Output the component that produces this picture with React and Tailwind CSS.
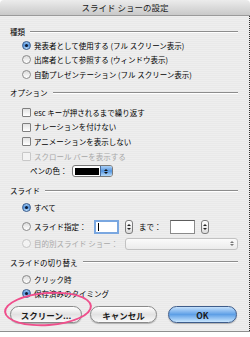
import React from 'react';

const Radio = ({ checked, disabled }) => (
  <span
    className={`w-[9px] h-[9px] rounded-full border shrink-0 flex items-center justify-center ${
      checked
        ? 'border-[#35598c] bg-linear-to-b from-[#9cc7f2] via-[#4f91dc] to-[#c2e2fc]'
        : disabled
        ? 'border-[#c6c6c6] bg-[#f3f3f3]'
        : 'border-[#8b8b8b] bg-linear-to-b from-[#dcdcdc] to-white'
    }`}
  >
    {checked && <span className="w-[3px] h-[3px] rounded-full bg-[#0e1a33]" />}
  </span>
);

const Check = ({ disabled }) => (
  <span
    className={`w-[9px] h-[9px] rounded-[1px] border shrink-0 ${
      disabled ? 'border-[#c8c8c8] bg-[#f3f3f3]' : 'border-[#7f7f7f] bg-linear-to-b from-[#e2e2e2] to-white'
    }`}
  />
);

const Header = ({ children, className = '' }) => (
  <div className={`h-[12px] flex items-center gap-[5px] ${className}`}>
    <span className="text-black">{children}</span>
    <span className="flex-1 h-px bg-[#8c8c8c] border-b border-white box-content" />
  </div>
);

const Stepper = ({ disabled }) => (
  <span
    className={`w-[8px] h-[14px] rounded-[3px] border flex flex-col items-center justify-center gap-[2px] shrink-0 ${
      disabled ? 'border-[#c4c4c4] bg-[#f0f0f0]' : 'border-[#7d7d7d] bg-linear-to-b from-white to-[#dcdcdc]'
    }`}
  >
    <span className="w-0 h-0 border-l-[2px] border-r-[2px] border-b-[2px] border-l-transparent border-r-transparent border-b-[#222]" />
    <span className="w-0 h-0 border-l-[2px] border-r-[2px] border-t-[2px] border-l-transparent border-r-transparent border-t-[#222]" />
  </span>
);

const AquaButton = ({ children, blue, className = '' }) => (
  <div
    className={`h-[17px] rounded-full border flex items-center justify-center text-[8.5px] font-bold text-[#1a1a1a] shadow-[0_1px_1px_rgba(0,0,0,0.25)] ${
      blue
        ? 'border-[#3e5c8a] bg-linear-to-b from-[#c4e0fb] via-[#5d9fe6] to-[#c9e6fd]'
        : 'border-[#8a8a8a] bg-linear-to-b from-white via-[#e2e2e2] to-[#fafafa]'
    } ${className}`}
  >
    {children}
  </div>
);

export default function App() {
  return (
    <div className="w-[250px] h-[337px] bg-white relative overflow-hidden font-['Noto_Sans_CJK_JP','Noto_Sans',sans-serif] text-[7.5px] leading-none text-black">
      <div className="h-[332px] flex flex-col border-b border-[#8e8e8e]">
        <div className="h-[16px] shrink-0 rounded-t-[4px] bg-linear-to-b from-[#ececec] to-[#c9c9c9] border-b border-[#9a9a9a] flex items-center justify-center">
          <span className="text-[8.5px] text-[#1c1c1c]">スライド ショーの設定</span>
        </div>

        <div className="flex-1 pl-[10px] pr-[11px] border-r border-dotted border-r-[#333] bg-[repeating-linear-gradient(180deg,#eeeeee_0px,#eeeeee_1px,#e9e9e9_1px,#e9e9e9_2px)] relative">
          <Header className="mt-[10px]">種類</Header>
          <div className="pl-[12px]">
            <div className="h-[14.5px] flex items-center gap-[3px]"><Radio checked /><span>発表者として使用する (フル スクリーン表示)</span></div>
            <div className="h-[14.5px] flex items-center gap-[3px]"><Radio /><span>出席者として参照する (ウィンドウ表示)</span></div>
            <div className="h-[14.5px] flex items-center gap-[3px]"><Radio /><span>自動プレゼンテーション (フル スクリーン表示)</span></div>
          </div>

          <Header className="mt-[5.5px]">オプション</Header>
          <div className="pl-[12px] mt-[6px]">
            <div className="h-[14.8px] flex items-center gap-[3px]"><Check /><span>esc キーが押されるまで繰り返す</span></div>
            <div className="h-[14.8px] flex items-center gap-[3px]"><Check /><span>ナレーションを付けない</span></div>
            <div className="h-[14.8px] flex items-center gap-[3px]"><Check /><span>アニメーションを表示しない</span></div>
            <div className="h-[14.8px] flex items-center gap-[3px] text-[#a8a8a8]"><Check disabled /><span>スクロール バーを表示する</span></div>
          </div>
          <div className="h-[14px] pl-[20px] flex items-center gap-[4px]">
            <span>ペンの色：</span>
            <div className="w-[41px] h-[12px] rounded-[3px] border border-[#7a7a7a] bg-white flex items-center overflow-hidden">
              <span className="ml-[2px] w-[24px] h-[7px] bg-black" />
              <span className="ml-auto w-[12px] h-full bg-linear-to-b from-[#a9d0f7] via-[#5495df] to-[#b5daf9] border-l border-[#4a6d9c] flex flex-col items-center justify-center gap-[1px]">
                <span className="w-0 h-0 border-l-[2px] border-r-[2px] border-b-[2px] border-l-transparent border-r-transparent border-b-[#111]" />
                <span className="w-0 h-0 border-l-[2px] border-r-[2px] border-t-[2px] border-l-transparent border-r-transparent border-t-[#111]" />
              </span>
            </div>
          </div>

          <Header className="mt-[6.8px]">スライド</Header>
          <div className="pl-[12px]">
            <div className="mt-[4px] h-[14px] flex items-center gap-[3px]"><Radio checked /><span>すべて</span></div>
            <div className="mt-[4px] h-[16px] flex items-center gap-[3px]">
              <Radio />
              <span className="w-[57px]">スライド指定：</span>
              <div className="w-[25px] h-[14px] border-2 border-[#7aa7e0] bg-white flex items-center pl-[2px]">
                <span className="w-px h-[8px] bg-black" />
              </div>
              <span className="ml-[3px]"><Stepper /></span>
              <span className="ml-[3px] w-[28px]">まで：</span>
              <div className="w-[25px] h-[14px] border border-[#8a8a8a] border-t-[#5c5c5c] bg-white" />
              <span className="ml-[3px]"><Stepper /></span>
            </div>
            <div className="mt-[1px] h-[16px] flex items-center gap-[3px] text-[#a8a8a8]">
              <Radio disabled />
              <span className="w-[88px]">目的別スライド ショー：</span>
              <div className="flex-1 h-[12px] rounded-[3px] border border-[#c2c2c2] bg-linear-to-b from-[#fbfbfb] to-[#ececec] flex items-center justify-end pr-[3px]">
                <span className="flex flex-col gap-[1px]">
                  <span className="w-0 h-0 border-l-[2px] border-r-[2px] border-b-[2px] border-l-transparent border-r-transparent border-b-[#777]" />
                  <span className="w-0 h-0 border-l-[2px] border-r-[2px] border-t-[2px] border-l-transparent border-r-transparent border-t-[#777]" />
                </span>
              </div>
            </div>
          </div>

          <Header className="mt-[4.5px]">スライドの切り替え</Header>
          <div className="pl-[12px] mt-[4px]">
            <div className="h-[14px] flex items-center gap-[3px]"><Radio /><span>クリック時</span></div>
            <div className="h-[14px] flex items-center gap-[3px]"><Radio checked /><span>保存済みのタイミング</span></div>
          </div>

          <div className="mt-[6px] flex items-center">
            <AquaButton className="w-[72px]">スクリーン...</AquaButton>
            <AquaButton className="w-[67px] ml-[8px]">キャンセル</AquaButton>
            <AquaButton blue className="w-[69px] ml-[11px]">OK</AquaButton>
          </div>
        </div>
      </div>

      <div className="absolute left-[4px] top-[292px] w-[88px] h-[34px] rounded-[50%] border-2 border-[#ef4f8c] rotate-[-4deg]" />
    </div>
  );
}
